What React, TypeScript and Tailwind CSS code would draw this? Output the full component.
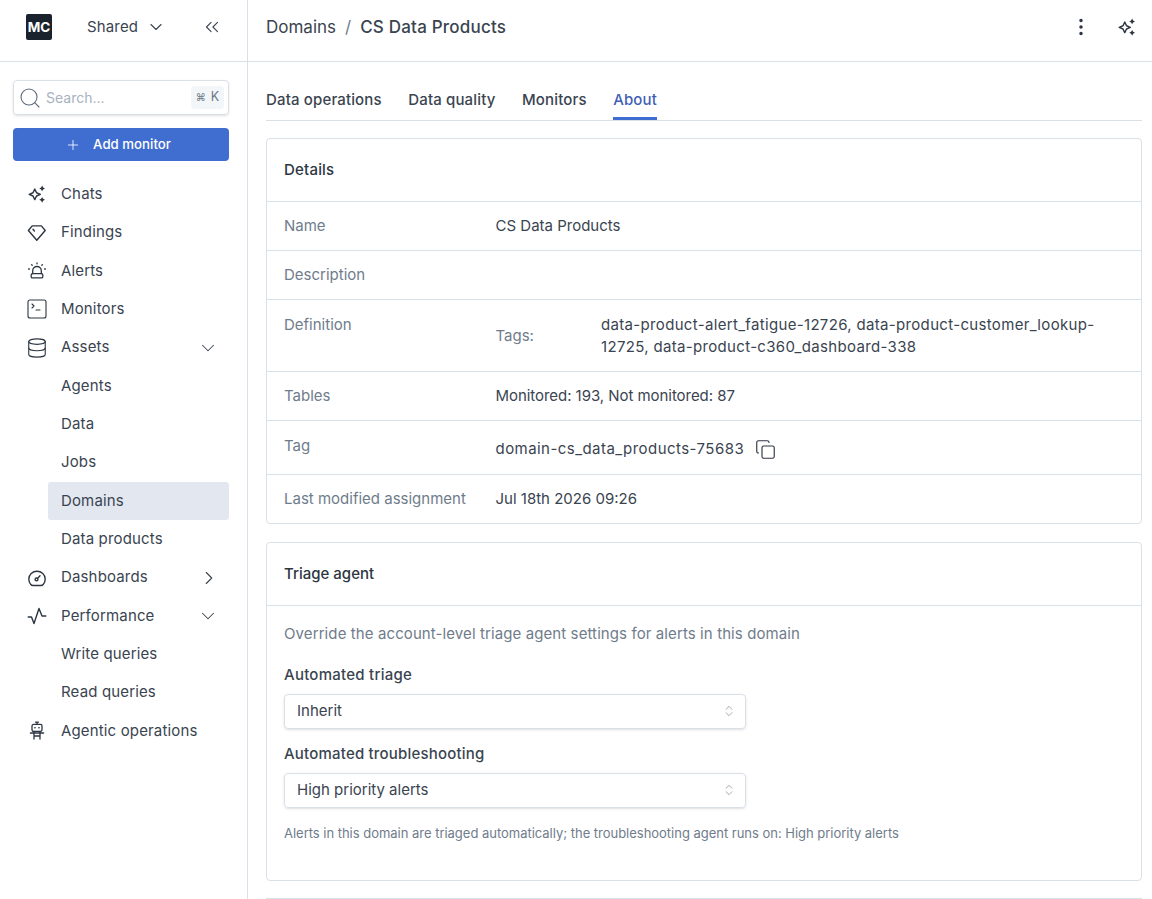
import { ChevronDown, ChevronRight, ChevronsLeft, ChevronsUpDown, Copy, Database, MoreVertical, Plus, Search, SquareTerminal } from "lucide-react";
import type { ReactNode } from "react";

const Sparkle = ({ className = "" }: { className?: string }) => (
  <svg viewBox="0 0 18 18" className={className} fill="none">
    <path d="M7 4.6 8.6 7.9 12 9.3 8.6 10.8 7 14 5.4 10.8 2 9.3 5.4 7.9Z" stroke="currentColor" strokeWidth="1.3" strokeLinejoin="round" />
    <path d="M13.6 1.4 14.5 3.2 16.2 4 14.5 4.9 13.6 6.6 12.7 4.9 11 4 12.7 3.2Z" fill="currentColor" />
    <path d="M13.6 11.6 14.5 13.3 16.2 14.2 14.5 15 13.6 16.8 12.7 15 11 14.2 12.7 13.3Z" fill="currentColor" />
  </svg>
);

const FindingsIcon = () => (
  <svg viewBox="0 0 20 20" className="w-[20px] h-[20px]" fill="none" stroke="currentColor" strokeWidth="1.4" strokeLinejoin="round" strokeLinecap="round">
    <path d="M5.2 2.9h9.2l3.8 4.6-8.4 9.8-8.4-9.8Z" />
    <path d="M6 6.2 7.4 8" />
  </svg>
);

const AlertIcon = () => (
  <svg viewBox="0 0 20 20" className="w-[20px] h-[20px]" fill="none" stroke="currentColor" strokeWidth="1.3" strokeLinecap="round" strokeLinejoin="round">
    <path d="M5.7 12.7V9.8a4.3 4.3 0 0 1 8.6 0v2.9" />
    <rect x="4.2" y="12.7" width="11.6" height="4.2" rx="1.2" />
    <path d="M10 1.8v1M4.6 3.6l.6.6M15.4 3.6l-.6.6M1.6 8h.8M17.6 8h.8" />
  </svg>
);

const GaugeIcon = () => (
  <svg viewBox="0 0 20 20" className="w-[20px] h-[20px]" fill="none" stroke="currentColor" strokeWidth="1.4" strokeLinecap="round" strokeLinejoin="round">
    <path d="M1.8 11a8.2 7.8 0 0 1 16.4 0c0 2.5-.8 4.2-2 5.5-.6.7-1.4 1-2.2 1H6c-.8 0-1.6-.3-2.2-1-1.2-1.3-2-3-2-5.5Z" />
    <circle cx="9.5" cy="11.4" r="1.4" />
    <path d="M10.5 10.4 13 7.8" />
  </svg>
);

const PulseIcon = () => (
  <svg viewBox="0 0 20 20" className="w-[20px] h-[20px]" fill="none" stroke="currentColor" strokeWidth="1.4" strokeLinecap="round" strokeLinejoin="round">
    <path d="M1.2 11h3.3L7 17.5l5-15 3 7.5h3.8" />
  </svg>
);

const BotIcon = () => (
  <svg viewBox="0 0 20 20" className="w-[20px] h-[20px]" fill="none" stroke="currentColor" strokeWidth="1.3" strokeLinecap="round" strokeLinejoin="round">
    <rect x="5" y="3.4" width="10" height="7" rx="1.6" />
    <path d="M10 1.2v2.2M8.6 1.2h2.8M3.4 12h13.2M7 10.4V18M13 10.4V18M7 15h6" />
    <rect x="7.3" y="6" width="1.4" height="1.4" fill="currentColor" stroke="none" />
    <rect x="11.3" y="6" width="1.4" height="1.4" fill="currentColor" stroke="none" />
  </svg>
);

type NavItem = {
  label: string;
  icon?: ReactNode;
  chevron?: "down" | "right";
  active?: boolean;
};

const NAV_ITEMS: NavItem[] = [
  { label: "Chats", icon: <Sparkle className="w-[20px] h-[20px]" /> },
  { label: "Findings", icon: <FindingsIcon /> },
  { label: "Alerts", icon: <AlertIcon /> },
  { label: "Monitors", icon: <SquareTerminal size={24} strokeWidth={1.1} className="-ml-[2px]" /> },
  { label: "Assets", icon: <Database size={22} strokeWidth={1.2} className="-ml-[1px]" />, chevron: "down" },
  { label: "Agents" },
  { label: "Data" },
  { label: "Jobs" },
  { label: "Domains", active: true },
  { label: "Data products" },
  { label: "Dashboards", icon: <GaugeIcon />, chevron: "right" },
  { label: "Performance", icon: <PulseIcon />, chevron: "down" },
  { label: "Write queries" },
  { label: "Read queries" },
  { label: "Agentic operations", icon: <BotIcon /> },
];

const Sidebar = () => (
  <aside className="w-[248px] shrink-0 h-full border-r border-[#d9e0e8] flex flex-col">
    <div className="h-[62px] shrink-0 border-b border-[#d9e0e8] flex items-center pl-[26px] pr-[24px] pb-[7px]">
      <div className="w-[26px] h-[26px] rounded-[2px] bg-[#1a222d] text-white text-[13.5px] font-bold flex items-center justify-center">MC</div>
      <span className="ml-[35px] text-[15px] tracking-[0.01em] text-[#3a4450]">Shared</span>
      <ChevronDown size={20} strokeWidth={1.3} className="ml-[8px] text-[#3a4450]" />
      <ChevronsLeft size={22} strokeWidth={1.2} className="ml-auto text-[#3a4450]" />
    </div>
    <div className="pl-[13px] pr-[18px] pt-[18px]">
      <div className="h-[35px] rounded-[4px] border border-[#d9e0e8] shadow-sm flex items-center pl-[4px] pr-[4px]">
        <Search size={24} strokeWidth={1.1} className="text-[#5f6b7a]" />
        <span className="ml-[4px] text-[14px] text-[#a7b2c0]">Search...</span>
        <span className="ml-auto w-[33px] h-[23px] rounded-[4px] bg-[#f3f6f9] flex items-center justify-center gap-[5px] text-[12.5px] text-[#6b7786]">
          <span className="text-[10px]">⌘</span>
          <span>K</span>
        </span>
      </div>
      <button className="mt-[13px] w-full h-[33px] rounded-[4px] bg-[#3f6dd0] text-white text-[13.25px] font-[450] flex items-center justify-center gap-[12px] pr-[6px]">
        <Plus size={16} strokeWidth={1.25} />
        Add monitor
      </button>
    </div>
    <nav className="mt-[14.1px] pl-[27px] pr-[18px]">
      {NAV_ITEMS.map((item) => (
        <div key={item.label} className={`h-[38.33px] flex items-center text-[15px] tracking-[0.01em] text-[#3a4450] ${item.active ? "bg-[#e2e7f0] rounded-[3px] ml-[21px]" : ""}`}>
          <span className={`shrink-0 flex items-center text-[#2c3641] ${item.active ? "w-[13px]" : "w-[34px]"}`}>{item.icon}</span>
          <span>{item.label}</span>
          {item.chevron === "down" && <ChevronDown size={22} strokeWidth={1.1} className="ml-auto mr-[10px] text-[#3a4450]" />}
          {item.chevron === "right" && <ChevronRight size={22} strokeWidth={1.2} className="ml-auto mr-[9px] text-[#3a4450]" />}
        </div>
      ))}
    </nav>
  </aside>
);

const Row = ({ label, height, labelClass = "", children }: { label: string; height: string; labelClass?: string; children?: ReactNode }) => (
  <div className={`flex items-center border-t border-[#d9e0e8] px-[17px] text-[15px] ${height}`}>
    <div className={`w-[211.5px] shrink-0 text-[#6f7c8b] ${labelClass}`}>{label}</div>
    <div className="flex-1 text-[#3a4450]">{children}</div>
  </div>
);

const SelectBox = ({ value }: { value: string }) => (
  <div className="mt-[8px] w-[462px] h-[35px] rounded-[4px] border border-[#d9e0e8] shadow-sm flex items-center justify-between pl-[12px] pr-[9px] pb-[2px] text-[15px] text-[#3a4450]">
    {value}
    <ChevronsUpDown size={14} strokeWidth={1.1} className="text-[#6f7c8b]" />
  </div>
);

const TABS = ["Data operations", "Data quality", "Monitors", "About"];

export default function App() {
  return (
    <div className="h-screen w-full overflow-hidden bg-white flex font-['Inter','Liberation_Sans',sans-serif]">
      <Sidebar />
      <main className="flex-1 min-w-0 h-full flex flex-col">
        <header className="h-[62px] shrink-0 border-b border-[#d9e0e8] flex items-center pl-[18px] pr-[15px] pb-[7px]">
          <span className="mt-[2px] text-[17px] text-[#3a4450]">Domains</span>
          <span className="mt-[2px] mx-[9px] text-[17px] text-[#6f7c8b]">/</span>
          <span className="mt-[2px] text-[17px] font-[450] tracking-[0.2px] text-[#3a4450]">CS Data Products</span>
          <MoreVertical size={22} strokeWidth={1.8} className="ml-auto text-[#2c3641]" />
          <Sparkle className="ml-[25px] w-[20px] h-[20px] text-[#2c3641]" />
        </header>
        <div className="pl-[18px] pr-[10px] flex-1 min-h-0">
          <div className="flex gap-[26.5px] h-[59px] items-end border-b border-[#d9e0e8] text-[15px] font-[450] tracking-[0.01em] text-[#3a4450]">
            {TABS.map((tab) => (
              <div key={tab} className={`h-[33px] pt-[2px] ${tab === "About" ? "text-[#3f5fb5] border-b-[3px] border-[#3f6dd0]" : ""}`}>
                {tab}
              </div>
            ))}
          </div>
          <section className="mt-[17px] border border-[#d9e0e8] rounded-[4px]">
            <div className="h-[62px] flex items-center px-[17px] text-[15px] font-[450] tracking-[0.2px] text-[#2c3641]">Details</div>
            <Row label="Name" height="h-[49px]">CS Data Products</Row>
            <Row label="Description" height="h-[49px]" />
            <div className="flex border-t border-[#d9e0e8] px-[17px] h-[72px] text-[15px]">
              <div className="w-[211.5px] shrink-0 pt-[14px] text-[#6f7c8b]">Definition</div>
              <div className="flex-1 flex items-center">
                <div className="w-[105.5px] shrink-0 pt-[2px] text-[#6f7c8b]">Tags:</div>
                <div className="leading-[22px] tracking-[0.33px] text-[#3a4450]">data-product-alert_fatigue-12726, data-product-customer_lookup-12725, data-product-c360_dashboard-338</div>
              </div>
            </div>
            <Row label="Tables" height="h-[49px]"><span className="tracking-[-0.05px]">Monitored: 193, Not monitored: 87</span></Row>
            <Row label="Tag" height="h-[54px] pt-[3px]" labelClass="pb-[6px]">
              <span className="flex items-center gap-[11px] tracking-[0.45px]">
                domain-cs_data_products-75683
                <Copy size={21} strokeWidth={1.3} className="text-[#2c3641]" />
              </span>
            </Row>
            <Row label="Last modified assignment" height="h-[49px]">Jul 18th 2026 09:26</Row>
          </section>
          <section className="mt-[18px] border border-[#d9e0e8] rounded-[4px] h-[339px]">
            <div className="h-[62px] flex items-center px-[17px] text-[15px] font-[450] text-[#2c3641]">Triage agent</div>
            <div className="border-t border-[#d9e0e8] px-[17px] pt-[17px] text-[15px] leading-[22px]">
              <p className="text-[#6f7c8b] tracking-[0.1px]">Override the account-level triage agent settings for alerts in this domain</p>
              <div className="mt-[19px] font-[450] tracking-[0.25px] text-[#3a4450]">Automated triage</div>
              <SelectBox value="Inherit" />
              <div className="mt-[14px] font-[450] tracking-[0.2px] text-[#3a4450]">Automated troubleshooting</div>
              <SelectBox value="High priority alerts" />
              <p className="mt-[15px] text-[13px] leading-[20px] tracking-[-0.02px] text-[#6f7c8b]">Alerts in this domain are triaged automatically; the troubleshooting agent runs on: High priority alerts</p>
            </div>
          </section>
          <div className="mt-[17px] border-t border-[#d9e0e8]" />
        </div>
      </main>
    </div>
  );
}
